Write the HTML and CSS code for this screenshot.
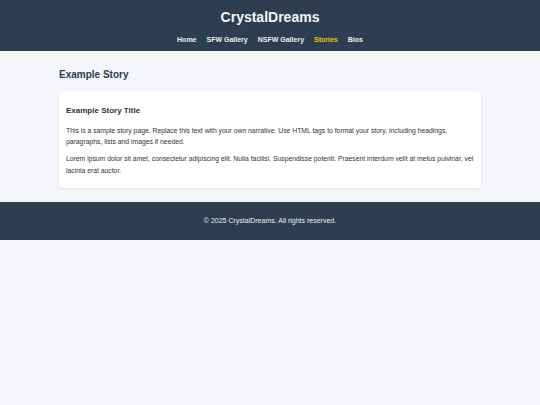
FILE: index.html
```html
<!DOCTYPE html>
<html lang="en">
<head>
<meta charset="utf-8">
<title>Example Story - CrystalDreams</title>
<link rel="stylesheet" href="styles.css">
</head>
<body>
<header class="site-header">
  <h1 class="logo">CrystalDreams</h1>
  <nav class="nav">
    <a href="#">Home</a>
    <a href="#">SFW Gallery</a>
    <a href="#">NSFW Gallery</a>
    <a href="#" class="active">Stories</a>
    <a href="#">Bios</a>
  </nav>
</header>
<main class="main">
  <h2 class="page-title">Example Story</h2>
  <article class="card">
    <h3 class="card-title">Example Story Title</h3>
    <p>This is a sample story page. Replace this text with your own narrative. Use HTML tags to format your story, including headings, paragraphs, lists and images if needed.</p>
    <p>Lorem ipsum dolor sit amet, consectetur adipiscing elit. Nulla facilisi. Suspendisse potenti. Praesent interdum velit at metus pulvinar, vel lacinia erat auctor.</p>
  </article>
</main>
<footer class="site-footer">
  <p>&copy; 2025 CrystalDreams. All rights reserved.</p>
</footer>
</body>
</html>
```

FILE: styles.css
```css
* { box-sizing: border-box; }
html, body {
  margin: 0;
  padding: 0;
  background: #f4f6fa;
  font-family: "Liberation Sans", Arial, sans-serif;
  color: #333;
}
.site-header {
  background: #2c3e50;
  color: #fff;
  text-align: center;
  padding: 8px 0 0;
  height: 51px;
}
.logo {
  margin: 0;
  font-size: 14px;
  line-height: 18px;
  font-weight: bold;
  color: #f4f6fa;
}
.nav {
  margin-top: 9px;
  display: flex;
  justify-content: center;
  gap: 10px;
}
.nav a {
  color: #ecf0f1;
  text-decoration: none;
  font-size: 7px;
  line-height: 10px;
  font-weight: bold;
}
.nav a.active { color: #f1c40f; }
.main {
  width: 422px;
  margin: 0 auto;
  padding: 17px 0 14px;
}
.page-title {
  margin: 0 0 9px;
  font-size: 10px;
  line-height: 14px;
  color: #2c3e50;
}
.card {
  background: #fff;
  border-radius: 4px;
  box-shadow: 0 1px 3px rgba(0, 0, 0, 0.08);
  padding: 14px 3px 6px 7px;
}
.card-title {
  margin: 0 0 8px;
  font-size: 8px;
  line-height: 12px;
  color: #333;
}
.card p {
  margin: 0 0 6px;
  font-size: 6.8px;
  line-height: 11.2px;
  color: #333;
}
.site-footer {
  background: #2c3e50;
  color: #ecf0f1;
  text-align: center;
  height: 38px;
  display: flex;
  align-items: center;
  justify-content: center;
}
.site-footer p {
  margin: 0;
  font-size: 7px;
  line-height: 10px;
}
```
